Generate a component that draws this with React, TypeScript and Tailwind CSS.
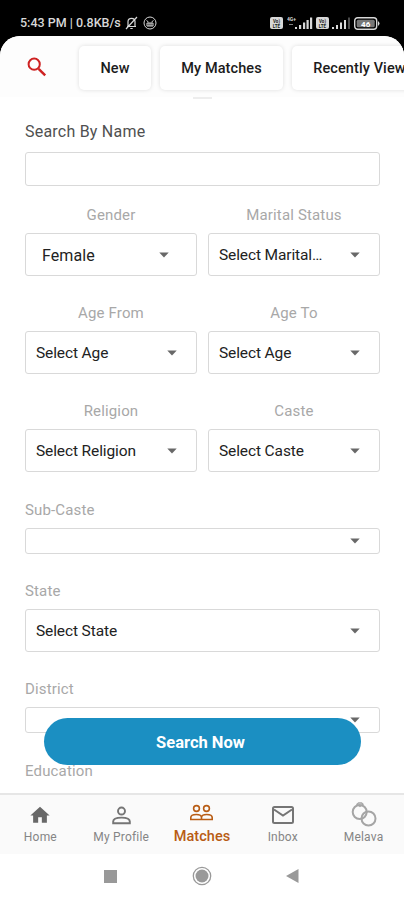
import React from "react";

const Caret = () => (
  <svg width="10" height="6" viewBox="0 0 10 6" className="shrink-0">
    <path d="M0.3 0.5h9.4L5 5.5z" fill="#686868" />
  </svg>
);

type FieldProps = { label: string; value?: string; center?: boolean; inset?: boolean; short?: boolean };

function Field({ label, value = "", center, inset, short }: FieldProps) {
  return (
    <div className="min-w-0 flex-1">
      <div className={`h-5 text-[15px] leading-5 tracking-[0.15px] text-[#a8a8a8] ${center ? "text-center" : ""}`}>
        {label}
      </div>
      <div
        className={`mt-[8px] flex items-center justify-between rounded-[3px] border border-[#d9d9d9] bg-white ${
          short ? "h-[26px]" : "h-[43px]"
        } ${inset ? "pr-[27px] pl-[16px]" : "pr-[19px] pl-[10px]"}`}
      >
        <span
          className={`pt-[2px] whitespace-nowrap text-[#222] ${
            inset ? "text-[16px] tracking-[0.1px]" : "text-[15.5px] tracking-[-0.12px]"
          }`}
        >
          {value}
        </span>
        <Caret />
      </div>
    </div>
  );
}

function StatusBar() {
  return (
    <div className="flex h-9 items-center justify-between bg-black pt-[10px] pr-[24px] pl-[20px] text-[#d8d8d8]">
      <div className="flex items-center text-[12.5px] font-medium">
        <span className="w-[102px] whitespace-nowrap">5:43 PM | 0.8KB/s</span>
        <svg width="13" height="14" viewBox="0 0 13 14" fill="none" stroke="currentColor" strokeWidth="1.2" className="ml-[3px]">
          <path d="M2 10.5h9M3 10V5.5C3 1.2 10 1.2 10 5.5V10M5.3 12.5h2.4M1 13 12 1" />
        </svg>
        <svg width="14" height="14" viewBox="0 0 14 14" fill="none" stroke="currentColor" strokeWidth="1" className="ml-[5px]">
          <circle cx="7" cy="7" r="6" />
          <path d="M3.5 4.5 5.5 6M10.5 4.5 8.5 6M4 7h6v3H4zM6 7v3M8 7v3" />
        </svg>
      </div>
      <div className="flex items-center">
        <Volte />
        <svg width="26" height="14" viewBox="0 0 26 14" className="ml-1" fill="currentColor">
          <text x="0" y="5" fontSize="5" fontWeight="700">4G+</text>
          <path d="M2 8h4v1H2z" opacity=".6" />
          <path d="M8 11h2v2H8zM12 9h2.200v4H12zM16 6.500h2.200V13H16zM19.500 4h2.200v9h-2.200zM23 1.500h2.200V13H23z" />
        </svg>
        <div className="ml-[3px]"><Volte /></div>
        <svg width="18" height="14" viewBox="0 0 18 14" className="ml-[3px]" fill="currentColor">
          <path d="M0 11h2v2H0zM4 9h2v4H4zM8 6.500h2V13H8zM12 4h2v9h-2z" />
          <path d="M16 1.500h2V13h-2z" opacity=".35" />
        </svg>
        <svg width="26" height="13" viewBox="0 0 26 13" className="ml-[4px]">
          <rect x="0.700" y="0.700" width="22" height="11.600" rx="3" fill="none" stroke="currentColor" strokeWidth="1.400" />
          <rect x="2.700" y="2.700" width="18" height="7.600" rx="1.500" fill="#777" />
          <path d="M24 4q3 2.500 0 5z" fill="currentColor" />
          <text x="11.700" y="9.500" fontSize="8" fontWeight="700" textAnchor="middle" fill="white">46</text>
        </svg>
      </div>
    </div>
  );
}

const Volte = () => (
  <svg width="13" height="12" viewBox="0 0 13 12">
    <rect width="13" height="12" rx="2" fill="#d8d8d8" />
    <text x="6.500" y="5.500" fontSize="4.500" fontWeight="700" textAnchor="middle" fill="#222">Vo)</text>
    <text x="6.500" y="10.500" fontSize="4.500" fontWeight="700" textAnchor="middle" fill="#222">LTE</text>
  </svg>
);

const tabClass =
  "flex h-[44px] shrink-0 items-center justify-center rounded-[5px] bg-white pt-[2px] text-[14.5px] font-medium tracking-[0.1px] whitespace-nowrap text-[#1c1c1c] shadow-[0_0_4px_rgba(0,0,0,0.13)]";

const person = "M12 11.500a4 4 0 1 0 0-8 4 4 0 0 0 0 8zM2.500 21.500v-2c0-3 4.500-4.500 9.500-4.500s9.500 1.500 9.500 4.500v2z";

function NavItem({ label, active, children }: { label: string; active?: boolean; children: React.ReactNode }) {
  return (
    <div className={`flex flex-1 flex-col items-center pt-[7px] ${active ? "text-[#b85c14]" : "text-[#757575]"}`}>
      <div className={`flex items-center justify-center ${active ? "h-[22px]" : "h-[26px]"}`}>{children}</div>
      <span
        className={
          active
            ? "mt-[4px] text-[14.5px] leading-[18px] font-medium tracking-[0.05px]"
            : "text-[12px] leading-[18px] tracking-[0.2px] text-[#858585]"
        }
      >
        {label}
      </span>
    </div>
  );
}

export default function App() {
  return (
    <div className="flex h-[900px] w-[404px] flex-col overflow-hidden bg-black font-[Roboto,sans-serif]">
      <StatusBar />
      <div className="flex min-h-0 flex-1 flex-col overflow-hidden rounded-t-[20px] bg-white">
        <div className="flex h-[61px] shrink-0 items-start bg-[#fdfdfd] pt-[10px]">
          <svg width="20" height="20" viewBox="0 0 20 20" className="mt-[11px] mr-[32px] ml-[27px] shrink-0" fill="none" stroke="#ce2222">
            <circle cx="7.200" cy="7.200" r="5.600" strokeWidth="2" />
            <path d="m11.600 11.800 6.600 6.500" strokeWidth="2.500" />
          </svg>
          <div className={`${tabClass} w-[72px]`}>New</div>
          <div className={`${tabClass} ml-[9px] w-[123px]`}>My Matches</div>
          <div className={`${tabClass} ml-[9px] w-[151px]`}>Recently Viewed</div>
        </div>
        <div className="mx-auto h-[2px] w-[19px] shrink-0 bg-[#ededed]" />

        <div className="min-h-0 flex-1 overflow-hidden pt-[23px] pr-[24px] pl-[25px]">
          <div className="h-5 text-[16px] leading-5 tracking-[0.220px] text-[#505050]">Search By Name</div>
          <div className="mt-[10px] h-[34px] rounded-[3px] border border-[#d9d9d9] bg-white" />
          <div className="mt-[19px] flex gap-[11px]">
            <Field label="Gender" value="Female" center inset />
            <Field label="Marital Status" value="Select Marital…" center />
          </div>
          <div className="mt-[27px] flex gap-[11px]">
            <Field label="Age From" value="Select Age" center />
            <Field label="Age To" value="Select Age" center />
          </div>
          <div className="mt-[27px] flex gap-[11px]">
            <Field label="Religion" value="Select Religion" center />
            <Field label="Caste" value="Select Caste" center />
          </div>
          <div className="mt-[28px] flex"><Field label="Sub-Caste" short /></div>
          <div className="mt-[27px] flex"><Field label="State" value="Select State" /></div>
          <div className="mt-[27px] flex"><Field label="District" short /></div>
          <div className="relative -mt-[15px] ml-[19px] flex h-[47px] w-[317px] items-center justify-center rounded-full bg-[#1b8fc2] pt-[3px] pr-[4px] text-[16.500px] font-bold text-white">
            Search Now
          </div>
          <div className="-mt-[4px] h-5 text-[15px] leading-5 tracking-[0.150px] text-[#a8a8a8]">Education</div>
        </div>

        <div className="flex h-[61px] shrink-0 border-t-2 border-[#e6e6e6] bg-[#fafafa]">
          <NavItem label="Home">
            <svg width="22" height="22" viewBox="0 0 24 24" fill="#686868"><path d="M10 20.500v-6h4v6h5.500v-8H22.500L12 3 1.500 12.500h3v8z" /></svg>
          </NavItem>
          <NavItem label="My Profile">
            <svg width="21" height="22" viewBox="0 0 24 24" fill="none" stroke="currentColor" strokeWidth="2.200"><path d={person} /></svg>
          </NavItem>
          <NavItem label="Matches" active>
            <svg width="25" height="18" viewBox="0 0 25 18" fill="none" stroke="currentColor" strokeWidth="1.600">
              <circle cx="7.500" cy="4.500" r="2.900" />
              <circle cx="17.500" cy="4.500" r="2.900" />
              <path d="M1.800 15.500v-2c0-2 2-3 5.500-3s5.200 1 5.200 3v2zM12.500 15.500v-2c0-2 2-3 5.200-3s5.500 1 5.500 3v2z" />
            </svg>
          </NavItem>
          <NavItem label="Inbox">
            <svg width="22" height="18" viewBox="0 0 22 18" fill="none" stroke="currentColor" strokeWidth="2">
              <rect x="1" y="1" width="20" height="16" rx="1.500" />
              <path d="m2 3.500 9 6 9-6" />
            </svg>
          </NavItem>
          <NavItem label="Melava">
            <svg width="26" height="26" viewBox="0 0 26 26" fill="none" stroke="#a5a5a5" strokeWidth="2">
              <circle cx="8.700" cy="10" r="7" />
              <circle cx="17.500" cy="16.500" r="7" />
              <path d="M7.500 1 6 2.200l3 2.300 3-2.300L10.500 1z" strokeWidth="1.300" />
            </svg>
          </NavItem>
        </div>
        <div className="flex h-[46px] shrink-0 items-center justify-center bg-white pr-[2px] pb-[2px]">
          <div className="h-[13px] w-[13px] bg-[#999]" />
          <svg width="20" height="20" viewBox="0 0 20 20" className="mr-[74px] ml-[75px]">
            <circle cx="10" cy="10" r="8.700" fill="none" stroke="#999" strokeWidth="1.300" />
            <circle cx="10" cy="10" r="6.500" fill="#999" />
          </svg>
          <svg width="13" height="14" viewBox="0 0 13 14"><path d="M12.500 0v14L0 7z" fill="#999" /></svg>
        </div>
      </div>
    </div>
  );
}
